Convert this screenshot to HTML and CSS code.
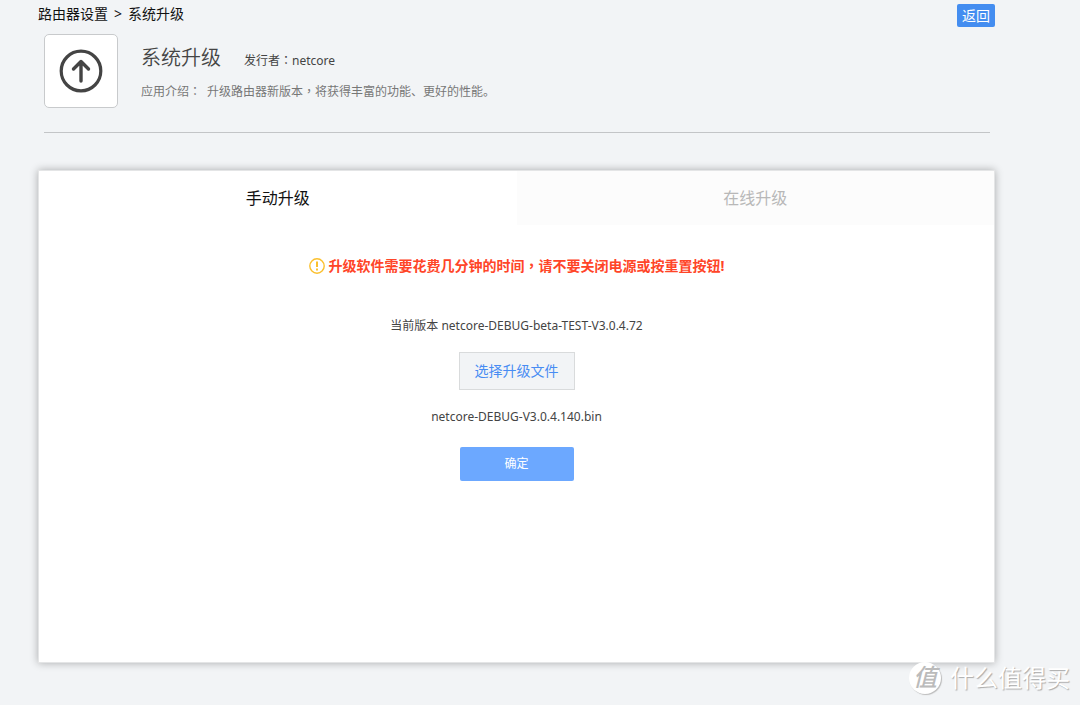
FILE: index.html
```html
<!DOCTYPE html>
<html lang="zh-CN">
<head>
<meta charset="utf-8">
<title>系统升级</title>
<link rel="stylesheet" href="styles.css">
</head>
<body>
<div class="page">
  <header class="topbar">
    <nav class="breadcrumb"><span>路由器设置</span><span>&gt;</span><span>系统升级</span></nav>
    <button class="back" type="button">返回</button>
  </header>
  <section class="app">
    <div class="app-icon">
      <svg width="44" height="44" viewBox="0 0 44 44" fill="none" stroke="#444" aria-hidden="true">
        <circle cx="22" cy="22" r="19.8" stroke-width="3.2"/>
        <path d="M22 32V13M14.500 20L22 12.500l7.500 7.500" stroke-width="3.400" stroke-linecap="round" stroke-linejoin="round"/>
      </svg>
    </div>
    <div class="app-info">
      <div class="app-heading">
        <h1 class="app-title">系统升级</h1>
        <span class="publisher">发行者<span class="punct" lang="zh-TW">：</span>netcore</span>
      </div>
      <p class="intro"><span>应用介绍<span class="punct" lang="zh-TW">：</span></span><span>升级路由器新版本<span class="punct" lang="zh-TW">，</span>将获得丰富的功能、更好的性能。</span></p>
    </div>
  </section>
  <main class="panel">
    <div class="tabs" role="tablist">
      <button class="tab tab-active" type="button" role="tab" aria-selected="true">手动升级</button>
      <button class="tab" type="button" role="tab" aria-selected="false">在线升级</button>
    </div>
    <div class="content">
      <p class="warning">
        <svg width="16" height="16" viewBox="0 0 16 16" fill="none" stroke="#fbc02d" aria-hidden="true">
          <circle cx="8" cy="8" r="7.200" stroke-width="1.400"/>
          <path d="M8 3.500v5.500M8 10.500v2" stroke-width="2"/>
        </svg>
        <strong>升级软件需要花费几分钟的时间<span class="punct" lang="zh-TW">，</span>请不要关闭电源或按重置按钮!</strong>
      </p>
      <p class="version">当前版本 netcore-DEBUG-beta-TEST-V3.0.4.72</p>
      <button class="choose" type="button">选择升级文件</button>
      <p class="filename">netcore-DEBUG-V3.0.4.140.bin</p>
      <button class="confirm" type="button">确定</button>
    </div>
  </main>
</div>
<div class="watermark"><span class="watermark-badge"><span class="watermark-mark">值</span></span><span>什么值得买</span></div>
</body>
</html>
```
FILE: styles.css
```css
* {
  box-sizing: border-box;
}

body {
  margin: 0;
  background: #f2f4f6;
  color: #444;
  font: 12px/20px "Noto Sans", "Noto Sans CJK SC", sans-serif;
}

button {
  padding: 0;
  border: 0;
  font: inherit;
  cursor: pointer;
}

h1,
p {
  margin: 0;
}

/* Full-width marks centred in their cell */
.punct {
  font-family: "Noto Sans CJK TC", sans-serif;
  line-height: 1;
}

.page {
  padding: 4px 85px 42px 38px;
}

.topbar {
  display: flex;
  justify-content: space-between;
}

.breadcrumb {
  display: flex;
  gap: 6px;
  color: #111;
  font-size: 14px;
}

.back {
  width: 38px;
  height: 23px;
  border-radius: 2px;
  background: #448df0;
  color: #fff;
  font-size: 14px;
}

.app {
  display: flex;
  gap: 23px;
  height: 106px;
  margin: 0 5px 37px 6px;
  padding-top: 7px;
  border-bottom: 1px solid #c3c5c7;
}

.app-icon {
  display: flex;
  align-items: center;
  justify-content: center;
  width: 74px;
  height: 74px;
  border: 1px solid #c8cacc;
  border-radius: 5px;
  background: #fff;
}

.app-info {
  padding-top: 9px;
}

.app-heading {
  display: flex;
  align-items: baseline;
  gap: 23px;
}

.app-title {
  font-size: 20px;
  font-weight: 350;
  line-height: 30px;
}

.intro {
  display: flex;
  gap: 6px;
  margin-top: 9px;
  color: #777;
}

.panel {
  min-height: 493px;
  border: 1px solid #e4e5e6;
  background: #fff;
  box-shadow: 0 0 8px rgba(0, 0, 0, 0.3);
}

.tabs {
  display: flex;
}

.tab {
  flex: 1;
  height: 54px;
  background: #fcfcfc;
  color: #b8b8b8;
  font-size: 16px;
}

.tab-active {
  background: #fff;
  color: #111;
}

.content {
  display: flex;
  flex-direction: column;
  align-items: center;
  padding-top: 31px;
}

.warning {
  display: flex;
  align-items: center;
  gap: 4px;
  color: #ff4528;
  font-size: 14px;
}

.version {
  margin-top: 40px;
}

.choose {
  width: 116px;
  height: 38px;
  margin-top: 16px;
  border: 1px solid #d9dbdc;
  background: #f2f4f6;
  color: #488cf3;
  font-size: 14px;
}

.filename {
  margin-top: 17px;
}

.confirm {
  width: 114px;
  height: 34px;
  margin-top: 20px;
  border-radius: 2px;
  background: #6ca8ff;
  color: #fff;
}

.watermark {
  position: absolute;
  right: 10px;
  bottom: 10px;
  display: flex;
  align-items: center;
  gap: 9px;
  color: #fff;
  font-size: 24px;
  line-height: 34px;
  text-shadow: 1px 1px 1px #aaa;
}

.watermark-badge {
  width: 32px;
  height: 32px;
  border-radius: 50%;
  background: #fff;
  box-shadow: 1px 1px 1px #bbb;
  color: #bbb;
  font-weight: 500;
  line-height: 30px;
  text-align: center;
  text-shadow: none;
}

.watermark-mark {
  display: block;
  font-style: italic;
}
```
